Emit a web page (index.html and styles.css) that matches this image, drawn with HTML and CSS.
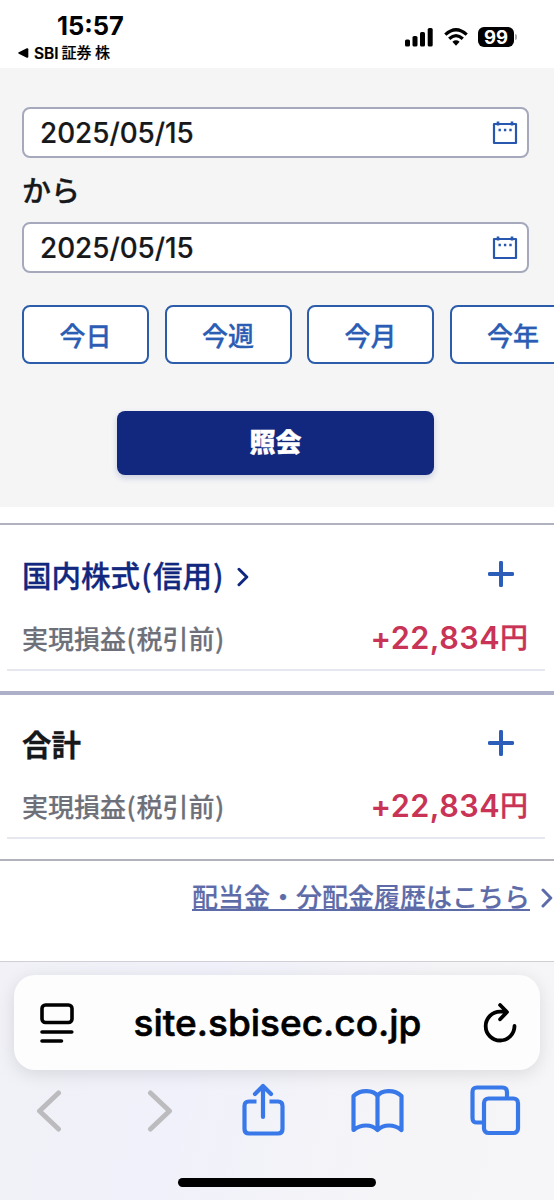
FILE: index.html
```html
<!DOCTYPE html>
<html lang="ja">
<head>
<meta charset="utf-8">
<meta name="viewport" content="width=device-width, initial-scale=1">
<title>実現損益</title>
<link rel="stylesheet" href="styles.css">
</head>
<body>
<div class="screen">
  <header class="status">
    <div class="status-left">
      <div class="clock">15:57</div>
      <div class="back-app"><svg width="11" height="10" viewBox="0 0 11 10"><path d="M.8 4.3 8.8.3Q10.3-.2 10.3 1.3V8.7Q10.3 10.2 8.8 9.7L.8 5.7Q-.4 5 .8 4.3Z"/></svg><span class="back-latin">SBI</span><span class="back-name">証券 株</span></div>
    </div>
    <div class="status-right">
      <svg class="signal" width="28" height="19" viewBox="0 0 28 19"><rect x="0" y="11.5" width="5" height="7" rx="1.6"/><rect x="7.5" y="8" width="5" height="10.5" rx="1.6"/><rect x="15" y="4" width="5" height="14.5" rx="1.6"/><rect x="22.7" y="0" width="5" height="18.5" rx="1.6"/></svg>
      <svg class="wifi" width="24" height="18" viewBox="0 0 24 18"><g fill="none" stroke="#000" stroke-width="3.2"><path d="M1.3 6.7Q12-3.3 22.7 6.7"/><path d="M5.2 10.8Q12 4.6 18.8 10.8"/></g><path d="M8.4 13.7Q12 10.8 15.6 13.7L12 17.7Z"/></svg>
      <span class="battery">99</span><span class="battery-cap"></span>
    </div>
  </header>

  <section class="search">
    <div class="date-field"><span class="date">2025/05/15</span>
      <svg class="calendar" width="26" height="24" viewBox="0 0 26 24"><path d="M2 3H24V22H2Z" fill="none" stroke="currentColor" stroke-width="2.2" stroke-linejoin="round"/><path d="M6 .5V4.5M20 .5V4.5" stroke="currentColor" stroke-width="2.6"/><path d="M6.5 9h2.4M11.9 9h2.4M17.3 9h2.4" stroke="currentColor" stroke-width="2.4"/></svg>
    </div>
    <div class="from">から</div>
    <div class="date-field"><span class="date">2025/05/15</span>
      <svg class="calendar" width="26" height="24" viewBox="0 0 26 24"><path d="M2 3H24V22H2Z" fill="none" stroke="currentColor" stroke-width="2.2" stroke-linejoin="round"/><path d="M6 .5V4.5M20 .5V4.5" stroke="currentColor" stroke-width="2.6"/><path d="M6.5 9h2.4M11.9 9h2.4M17.3 9h2.4" stroke="currentColor" stroke-width="2.4"/></svg>
    </div>
    <div class="periods">
      <div class="period">今日</div><div class="period">今週</div><div class="period">今月</div><div class="period">今年</div>
    </div>
    <div class="submit">照会</div>
  </section>

  <section class="result first">
    <div class="result-head">
      <h2 class="title link">国内株式<span class="paren">(</span>信用<span class="paren">)</span><svg class="chevron" width="12" height="20" viewBox="0 0 12 20"><path d="M2 2.3 9.8 10 2 17.7"/></svg></h2>
      <svg class="plus" width="26" height="26" viewBox="0 0 26 26"><path d="M13 1.7V24.3M1.7 13H24.3"/></svg>
    </div>
    <div class="result-row"><span class="label">実現損益<span class="paren">(</span>税引前<span class="paren">)</span></span><span class="amount"><span class="figure">+22,834</span><span class="yen">円</span></span></div>
  </section>
  <section class="result total">
    <div class="result-head">
      <h2 class="title">合計</h2>
      <svg class="plus" width="26" height="26" viewBox="0 0 26 26"><path d="M13 1.7V24.3M1.7 13H24.3"/></svg>
    </div>
    <div class="result-row"><span class="label">実現損益<span class="paren">(</span>税引前<span class="paren">)</span></span><span class="amount"><span class="figure">+22,834</span><span class="yen">円</span></span></div>
  </section>
  <div class="history"><a>配当金・分配金履歴はこちら</a><svg class="chevron" width="12" height="20" viewBox="0 0 12 20"><path d="M2 2 9.8 10 2 18"/></svg></div>

  <footer class="browser">
    <div class="address">
      <svg width="34" height="40" viewBox="0 0 34 40" fill="none" stroke="#000" stroke-width="3.6" stroke-linecap="round"><rect x="2" y="2" width="30" height="17.5" rx="3.5"/><path d="M2 29H31.8M2 38H21.5"/></svg>
      <span class="url">site.sbisec.co.jp</span>
      <svg width="34" height="40" viewBox="0 0 34 40" fill="none" stroke="#000" stroke-width="3.8" stroke-linecap="round" stroke-linejoin="round"><path d="M31.5 23A14.4 14.4 0 1 1 17.1 8.7H23.5M17.1 2 24 9 17.1 16.3"/></svg>
    </div>
    <nav class="tools">
      <svg class="off" width="26" height="42" viewBox="0 0 26 42"><path d="M22.5 3 3.5 21 22.5 39"/></svg>
      <svg class="off" width="26" height="42" viewBox="0 0 26 42"><path d="M3.5 3 22.5 21 3.5 39"/></svg>
      <svg class="share" width="44" height="54" viewBox="0 0 44 54"><path d="M14.5 18.5H7Q2.5 18.5 2.5 23V46Q2.5 50.5 7 50.5H36Q40.5 50.5 40.5 46V23Q40.5 18.5 36 18.5H27.5"/><path d="M21 34V3M13 11 21 3 29 11" stroke-linecap="round"/></svg>
      <svg class="book" width="53" height="46" viewBox="0 0 53 46"><path d="M26.5 8C22.5 2 10 1 2.5 8V42C10 36 20.5 36 26.5 42C32.5 36 43 36 50.5 42V8C43 1 30.5 2 26.5 8ZM26.5 8V42"/></svg>
      <svg class="tabs" width="52" height="52" viewBox="0 0 52 52"><rect x="14" y="13.5" width="34" height="34.5" rx="4.5"/><path d="M14 37.5H7Q2.5 37.5 2.5 33V7Q2.5 2.5 7 2.5H32.5Q37 2.5 37 7V13.5"/></svg>
    </nav>
    <div class="home"></div>
  </footer>
</div>
</body>
</html>
```
FILE: styles.css
```css
* { box-sizing: border-box; }
body { margin: 0; background: #fff; }
svg { display: block; flex: none; }
.screen {
  width: 554px;
  height: 1200px;
  overflow: hidden;
  display: flex;
  flex-direction: column;
  font-family: Inter, "Noto Sans CJK JP", sans-serif;
  color: #16181a;
  white-space: nowrap;
}

.status { height: 68px; display: flex; justify-content: space-between; padding: 12px 37px 0 18px; color: #000; }
.clock { margin-left: 39px; height: 28px; line-height: 28px; font-size: 25.5px; font-weight: 700; }
.back-app { display: flex; align-items: center; height: 26px; font-size: 15.5px; font-weight: 600; -webkit-text-stroke: 0.2px currentColor; }
.back-latin { margin-left: 5px; }
.back-name { margin-left: 3px; font-size: 15px; line-height: 20px; font-family: "Noto Sans CJK JP", sans-serif; font-weight: 500; padding-bottom: 2px; }
.status-right { display: flex; align-items: center; height: 50px; }
.wifi { margin-left: 11px; }
.battery {
  width: 36px; height: 20px; margin-left: 10px; border-radius: 6px;
  background: #000; color: #fff; text-align: center;
  font-size: 18.5px; line-height: 20px; font-weight: 700;
}
.battery-cap { width: 2px; height: 6px; margin-left: 1px; border-radius: 0 2px 2px 0; background: #aaa; }

.search { height: 439px; flex: none; padding: 39px 25px 0 22px; background: #f5f5f6; }
.date-field {
  height: 51px; display: flex; align-items: center; justify-content: space-between;
  padding: 0 9px 0 16px; border: 2px solid #a5a9bb; border-radius: 8px; background: #fff;
  font-size: 27.8px; font-weight: 500;
}
.date { padding-top: 1px; -webkit-text-stroke: 0.2px currentColor; }
.calendar { color: #2857b0; }
.from { height: 64px; line-height: 67px; font-size: 29px; font-weight: 500; -webkit-text-stroke: 0.3px currentColor; }
.periods { display: flex; gap: 15.5px; margin-top: 32px; }
.period {
  flex: none; width: 127px; height: 59px; border: 2px solid #2b5dab; border-radius: 8px;
  background: #fff; color: #2b5db5; text-align: center;
  font-size: 26px; line-height: 59px; font-weight: 500;
  -webkit-text-stroke: 0.3px currentColor;
}
.submit {
  width: 317px; height: 64px; margin: 47px 0 0 95px; border-radius: 8px;
  background: #12287f; color: #fff; text-align: center;
  font-size: 26px; line-height: 64px; font-weight: 800;
  -webkit-text-stroke: 0.4px currentColor;
  box-shadow: 0 3px 6px #12287f30;
}

.result { flex: none; }
.result.first { margin-top: 16px; height: 172px; padding-top: 23px; border-top: 2px solid #b1b2bf; border-bottom: 4px solid #aeb0c9; }
.result.total { height: 166px; padding-top: 22px; border-bottom: 2px solid #b1b2bc; }
.result-head { height: 52px; display: flex; align-items: center; justify-content: space-between; padding: 0 40px 0 22px; }
.title { display: flex; align-items: center; margin: 0; font-size: 29.5px; font-weight: 700; -webkit-text-stroke: 0.3px currentColor; }
.title.link { color: #12287f; font-weight: 500; }
.paren { font-family: "Noto Sans CJK JP", sans-serif; margin: 0 1.2px; }
.chevron { fill: none; stroke: currentColor; stroke-width: 3; stroke-linecap: round; stroke-linejoin: round; }
.title .chevron { margin: 5px 0 0 12px; }
.plus { fill: none; stroke: #2b5db9; stroke-width: 4; stroke-linecap: round; }
.result-row {
  height: 71px; margin: 0 9px 0 7px; padding: 6px 17px 0 15px;
  display: flex; align-items: center; justify-content: space-between;
  border-bottom: 2px solid #e7e7ef;
}
.result.total .result-row { height: 70px; padding-top: 5px; }
.label { font-size: 26px; color: #6e7079; font-weight: 500; -webkit-text-stroke: 0.2px currentColor; }
.label .paren { margin: 0 0.6px; }
.amount { display: flex; align-items: center; color: #c83356; }
.figure { font-size: 30.6px; line-height: 38px; font-weight: 600; padding-top: 1px; letter-spacing: 0.45px; }
.yen { font-size: 28px; line-height: 38px; font-weight: 500; -webkit-text-stroke: 0.4px currentColor; }
.history { height: 100px; flex: none; display: flex; justify-content: flex-end; align-items: flex-start; padding-top: 18px; color: #5d6ba8; }
.history a { font-size: 26px; line-height: 38px; font-weight: 500; text-decoration: underline; text-decoration-thickness: 2px; text-underline-offset: 2px; -webkit-text-stroke: 0.2px currentColor; }
.history .chevron { margin: 9px 1px 0 11px; }

.browser {
  flex: none; height: 239px; padding: 13px 14px 0; border-top: 1px solid #cfcfd5;
  background: linear-gradient(105deg, #f1f1f7, #f0f1fa 35%, #f5f5f8 70%, #f6f6f8);
}
.address {
  height: 95px; border-radius: 21px; background: #fdfdfe; color: #000;
  display: flex; align-items: center; justify-content: space-between; padding: 0 23px 0 26px;
  box-shadow: 0 4px 18px #0000001c;
}
.url { font-size: 37px; font-weight: 500; margin-right: 2px; -webkit-text-stroke: 0.6px currentColor; }
.tools { display: flex; height: 83px; padding-left: 22px; fill: none; stroke: #3978e8; stroke-width: 4.2; stroke-linejoin: round; }
.off { stroke: #bcbcbf; stroke-width: 5; stroke-linecap: round; margin-top: 20px; }
.off + .off { margin-left: 85px; }
.share { margin: 13px 0 0 69px; }
.book { margin: 18px 0 0 65px; }
.tabs { margin: 15px 0 0 66px; }
.home { width: 198px; height: 9px; margin: 25px auto 0; border-radius: 5px; background: #000; }
```
